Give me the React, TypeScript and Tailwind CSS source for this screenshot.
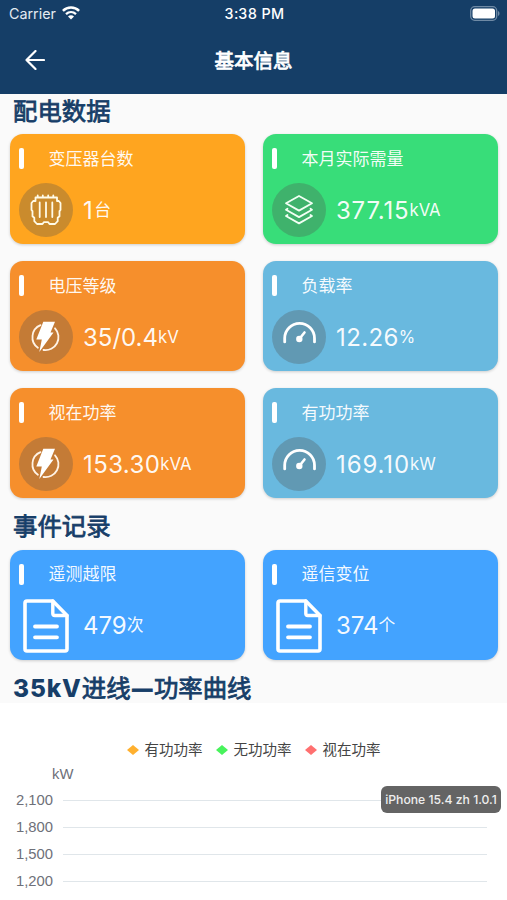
import type { ReactNode } from "react";

function WifiIcon() {
  return (
    <svg className="-mt-[2px] ml-[6px] h-[14px] w-[18px]" viewBox="0 0 18 14" fill="none" stroke="#fff">
      <path d="M0.9 4.9C5.4.4 12.6.4 17.1 4.9" strokeWidth="2.5" />
      <path d="M4 8.1c2.9-2.7 7.1-2.7 10 0" strokeWidth="2.3" />
      <path d="M9 13.6 6 10.4c1.7-1.6 4.3-1.6 6 0z" fill="#fff" stroke="none" />
    </svg>
  );
}

function TransformerIcon() {
  return (
    <svg className="h-8 w-8" viewBox="0 0 32 32" fill="none" stroke="#fffbe8" strokeWidth="1.8" strokeLinejoin="round" strokeLinecap="round">
      <path d="M5.5 3.500h21.500v3.500h1.800l1.700 2v7l-1 1.200v5l-1.800 1.500v3.500L25 30h-5.500l-1.300-1.800h-4.400L12.500 30H7l-2.700-2.800v-3.500l-1.800-1.500v-5L1.500 16V9l1.700-2h2.300z" />
      <path d="M7.700 3.200V1.500M12.800 3.200V1.500M18.200 3.200V1.500M23.300 3.200V1.500" />
      <path d="M9.700 8.500V23M16 8.500V23M22.300 8.500V23" />
    </svg>
  );
}

function LayersIcon() {
  return (
    <svg className="h-8 w-8" viewBox="0 0 32 32" fill="none" stroke="#f2fff4" strokeWidth="1.800" strokeLinejoin="round" strokeLinecap="round">
      <path d="M16 2 29 9.300 16 16.600 3 9.300z" />
      <path d="M4.500 14.700 3 15.700l13 7.400 13-7.400-1.500-1M4.500 21 3 22l13 7.400L29 22l-1.500-1" />
    </svg>
  );
}

function BoltIcon() {
  return (
    <svg className="h-8 w-8" viewBox="0 0 32 32" fill="none">
      <path d="M10.500 4.200A13 13 0 0 0 7.900 26.800M25 7.300A13 13 0 0 1 13.500 29" stroke="#fff3e6" strokeWidth="1.800" strokeLinecap="round" />
      <path d="M13.300.7H25l-4.500 10.800H23.500L9.300 31l2.500-12.500H6.300z" fill="#fff" />
    </svg>
  );
}

function GaugeIcon() {
  return (
    <svg className="h-9 w-9" viewBox="0 0 36 36" fill="none" stroke="#fff" strokeLinecap="round">
      <path d="M3.700 22.900v-3.700a14.900 14.900 0 0 1 29.800 0v3.700" strokeWidth="2.800" />
      <path d="m18.300 20 5.200-6.500" strokeWidth="2.600" />
      <circle cx="18.300" cy="20" r="3.200" fill="#fff" stroke="none" />
    </svg>
  );
}

function DocumentIcon() {
  return (
    <svg className="ml-1 h-[54px] w-[46px] shrink-0" viewBox="0 0 46 54" fill="none" stroke="#fff" strokeLinejoin="round" strokeLinecap="round">
      <path d="M4 2h25.800L44 16.500V50a2 2 0 0 1-2 2H4a2 2 0 0 1-2-2V4a2 2 0 0 1 2-2Z" strokeWidth="3.600" />
      <path d="M29.800 2v12.500a2 2 0 0 0 2 2H44" strokeWidth="3.400" />
      <path d="M12 27.500h22M12 38.300h22" strokeWidth="3.800" />
    </svg>
  );
}

type CardProps = {
  title: string;
  value: string;
  unit: string;
  tone: string;
  icon: ReactNode;
  spacing?: string;
  plain?: boolean;
};

function Card({ title, value, unit, tone, icon, spacing = "", plain }: CardProps) {
  return (
    <div className={`h-[110px] rounded-[13px] pl-[9px] shadow-[0_1px_3px_rgba(0,0,0,0.18)] ${tone}`}>
      <div className="flex h-[49px] items-center">
        <span className="h-[21px] w-[5px] rounded-[2px] bg-white" />
        <span className="ml-[24.5px] text-[17px] leading-6 text-white/95">{title}</span>
      </div>
      <div className="flex h-[54px] items-center">
        <div className="flex w-[64px] shrink-0">
          {plain ? icon : (
            <div className="flex size-[54px] items-center justify-center rounded-full bg-[#4e4e4e]/30">{icon}</div>
          )}
        </div>
        <div className="flex items-baseline whitespace-nowrap pt-[3px] leading-8 text-white/95">
          <span className={`text-[24px] ${spacing}`}>{value}</span>
          <span className="-translate-y-[3.5px] text-[16.800px]">{unit}</span>
        </div>
      </div>
    </div>
  );
}

function Heading({ children, className }: { children: ReactNode; className: string }) {
  return <h2 className={`pl-[13px] text-[24.4px] font-normal leading-9 text-[#173e68] [-webkit-text-stroke:0.8px_#173e68] ${className}`}>{children}</h2>;
}

const metrics: CardProps[] = [
  { title: "变压器台数", value: "1", unit: "台", tone: "bg-[#ffa51f]", spacing: "tracking-[1.5px]", icon: <TransformerIcon /> },
  { title: "本月实际需量", value: "377.15", unit: "kVA", tone: "bg-[#38dd79]", spacing: "tracking-[0.8px]", icon: <LayersIcon /> },
  { title: "电压等级", value: "35/0.4", unit: "kV", tone: "bg-[#f68f2c]", icon: <BoltIcon /> },
  { title: "负载率", value: "12.26", unit: "%", tone: "bg-[#69b9df]", spacing: "tracking-[0.4px]", icon: <GaugeIcon /> },
  { title: "视在功率", value: "153.30", unit: "kVA", tone: "bg-[#f68f2c]", spacing: "tracking-[0.4px]", icon: <BoltIcon /> },
  { title: "有功功率", value: "169.10", unit: "kW", tone: "bg-[#69b9df]", spacing: "tracking-[0.9px]", icon: <GaugeIcon /> },
];

const events: CardProps[] = [
  { title: "遥测越限", value: "479", unit: "次", tone: "bg-[#43a3ff]", icon: <DocumentIcon />, plain: true },
  { title: "遥信变位", value: "374", unit: "个", tone: "bg-[#43a3ff]", icon: <DocumentIcon />, plain: true },
];

const series = [
  { name: "有功功率", color: "#ffb02e" },
  { name: "无功功率", color: "#48f35c" },
  { name: "视在功率", color: "#ff7070" },
];

const ticks = ["2,100", "1,800", "1,500", "1,200"];

export default function App() {
  return (
    <div className="relative h-[900px] w-[507px] overflow-hidden bg-[#fafafa] font-['Inter','Noto_Sans_CJK_SC',sans-serif]">
      <header className="h-[93.5px] bg-[#153e67] text-white">
        <div className="grid h-7 grid-cols-3 items-center pl-[9px] pr-[7px] text-[14.300px]">
          <div className="flex items-center text-[#e4ebf2]">Carrier<WifiIcon /></div>
          <div className="text-center font-medium tabular-nums tracking-[0.300px]">3:38 PM</div>
          <svg className="-mt-[2px] h-[15px] w-[30px] justify-self-end" viewBox="0 0 30 15" fill="none">
            <rect x="0.700" y="0.700" width="26" height="13.600" rx="4" stroke="#6f8aa5" strokeWidth="1.300" />
            <rect x="2.500" y="2.500" width="22.500" height="10" rx="2.500" fill="#fff" />
            <path d="M28 5v5c2-.8 2-4.200 0-5Z" fill="#6f8aa5" />
          </svg>
        </div>
        <div className="grid h-[64px] grid-cols-3 items-center">
          <svg className="ml-[25px] size-5" viewBox="0 0 20 20" fill="none" stroke="#fff" strokeWidth="2.200" strokeLinecap="round" strokeLinejoin="round">
            <path d="M10.500 1 1.500 10l9 9M1.500 10h17.500" />
          </svg>
          <h1 className="pt-[3px] text-center text-[19.500px] [-webkit-text-stroke:0.8px_#fff]">基本信息</h1>
        </div>
      </header>

      <Heading className="-mt-px h-[41.5px]">配电数据</Heading>
      <section className="grid grid-cols-2 gap-x-[18px] gap-y-[17px] pl-[10px] pr-[9px]">
        {metrics.map((m) => <Card key={m.title} {...m} />)}
      </section>

      <Heading className="h-[51.5px] pt-[9.5px]">事件记录</Heading>
      <section className="grid grid-cols-2 gap-x-[18px] pl-[10px] pr-[9px]">
        {events.map((e) => <Card key={e.title} {...e} />)}
      </section>

      <Heading className="flex h-[43.5px] items-baseline pt-[10px]">
        <span className="font-extrabold tracking-[0.900px] [-webkit-text-stroke:0px]">35kV</span>
        <span>进线</span>
        <span className="flex w-[23.400px] -translate-y-px justify-center text-[20px] font-extrabold">—</span>
        <span>功率曲线</span>
      </Heading>

      <section className="h-[197.5px] bg-white pt-[36px] text-[#6e7079]">
        <div className="flex h-[22px] items-center justify-center gap-[13px] text-[14.500px] text-[#444]">
          {series.map((s) => (
            <div key={s.name} className="flex items-center gap-[6px]">
              <svg className="h-[10px] w-3" viewBox="0 0 12 10"><path d="M6 0 12 5 6 10 0 5Z" fill={s.color} /></svg>
              {s.name}
            </div>
          ))}
        </div>
        <div className="font-['Liberation_Sans',sans-serif] text-[14.800px]">
          <div className="h-[25.5px] pl-[52px] pt-[1px] leading-[24px]">kW</div>
          {ticks.map((t) => (
            <div key={t} className="flex h-[27px] items-center pr-5">
              <span className="w-[53px] text-right">{t}</span>
              <span className="ml-[10px] h-px flex-1 bg-[#e0e6ea]" />
            </div>
          ))}
        </div>
      </section>

      <div className="absolute left-[381px] top-[786px] flex h-[27px] w-[120px] items-center justify-center whitespace-nowrap rounded-[6px] bg-[#646464] pt-px text-[12.200px] font-medium text-[#eee]">
        iPhone 15.4 zh 1.0.1
      </div>
    </div>
  );
}
